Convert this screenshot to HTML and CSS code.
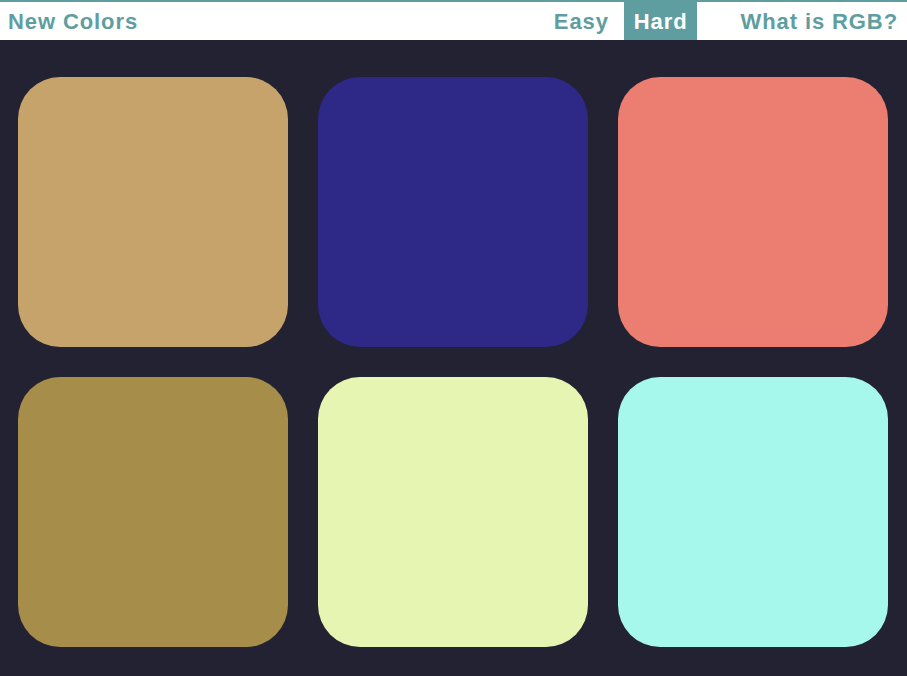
FILE: index.html
```html
<!DOCTYPE html>
<html>
<head>
<meta charset="utf-8">
<link rel="stylesheet" href="styles.css">
</head>
<body>
<header class="stripe">
  <button class="btn">New Colors</button>
  <div class="spacer"></div>
  <button class="btn">Easy</button>
  <button class="btn selected">Hard</button>
  <button class="btn rgb">What is RGB?</button>
</header>
<main class="grid">
  <div class="square" style="background:#c6a36b"></div>
  <div class="square" style="background:#2e2887"></div>
  <div class="square" style="background:#eb7d71"></div>
  <div class="square" style="background:#a68d4a"></div>
  <div class="square" style="background:#e6f6b2"></div>
  <div class="square" style="background:#a6f7ec"></div>
</main>
</body>
</html>
```

FILE: styles.css
```css
* { box-sizing: border-box; }
html, body { margin: 0; padding: 0; }
body {
  background: #232232;
  font-family: "Liberation Sans", Arial, sans-serif;
  height: 676px;
  overflow: hidden;
}
.stripe {
  display: flex;
  align-items: stretch;
  height: 40px;
  background: #fff;
  border-top: 2px solid #5f9ea0;
}
.spacer { flex: 1; }
.btn {
  border: none;
  background: none;
  font-family: inherit;
  font-weight: bold;
  font-size: 22px;
  letter-spacing: 0.9px;
  color: #5f9ea0;
  padding: 0 8px;
  margin: 0;
  height: 38px;
  line-height: 39px;
  cursor: pointer;
}
.selected {
  background: #5f9ea0;
  color: #fff;
  margin-left: 7px;
  padding: 0 9px 0 10px;
}
.rgb { margin-left: 34px; padding: 0 9px 0 10px; }
.grid {
  display: grid;
  grid-template-columns: repeat(3, 270px);
  grid-auto-rows: 270px;
  gap: 30px;
  padding: 37px 0 0 18px;
}
.square {
  border-radius: 42px;
}
```
